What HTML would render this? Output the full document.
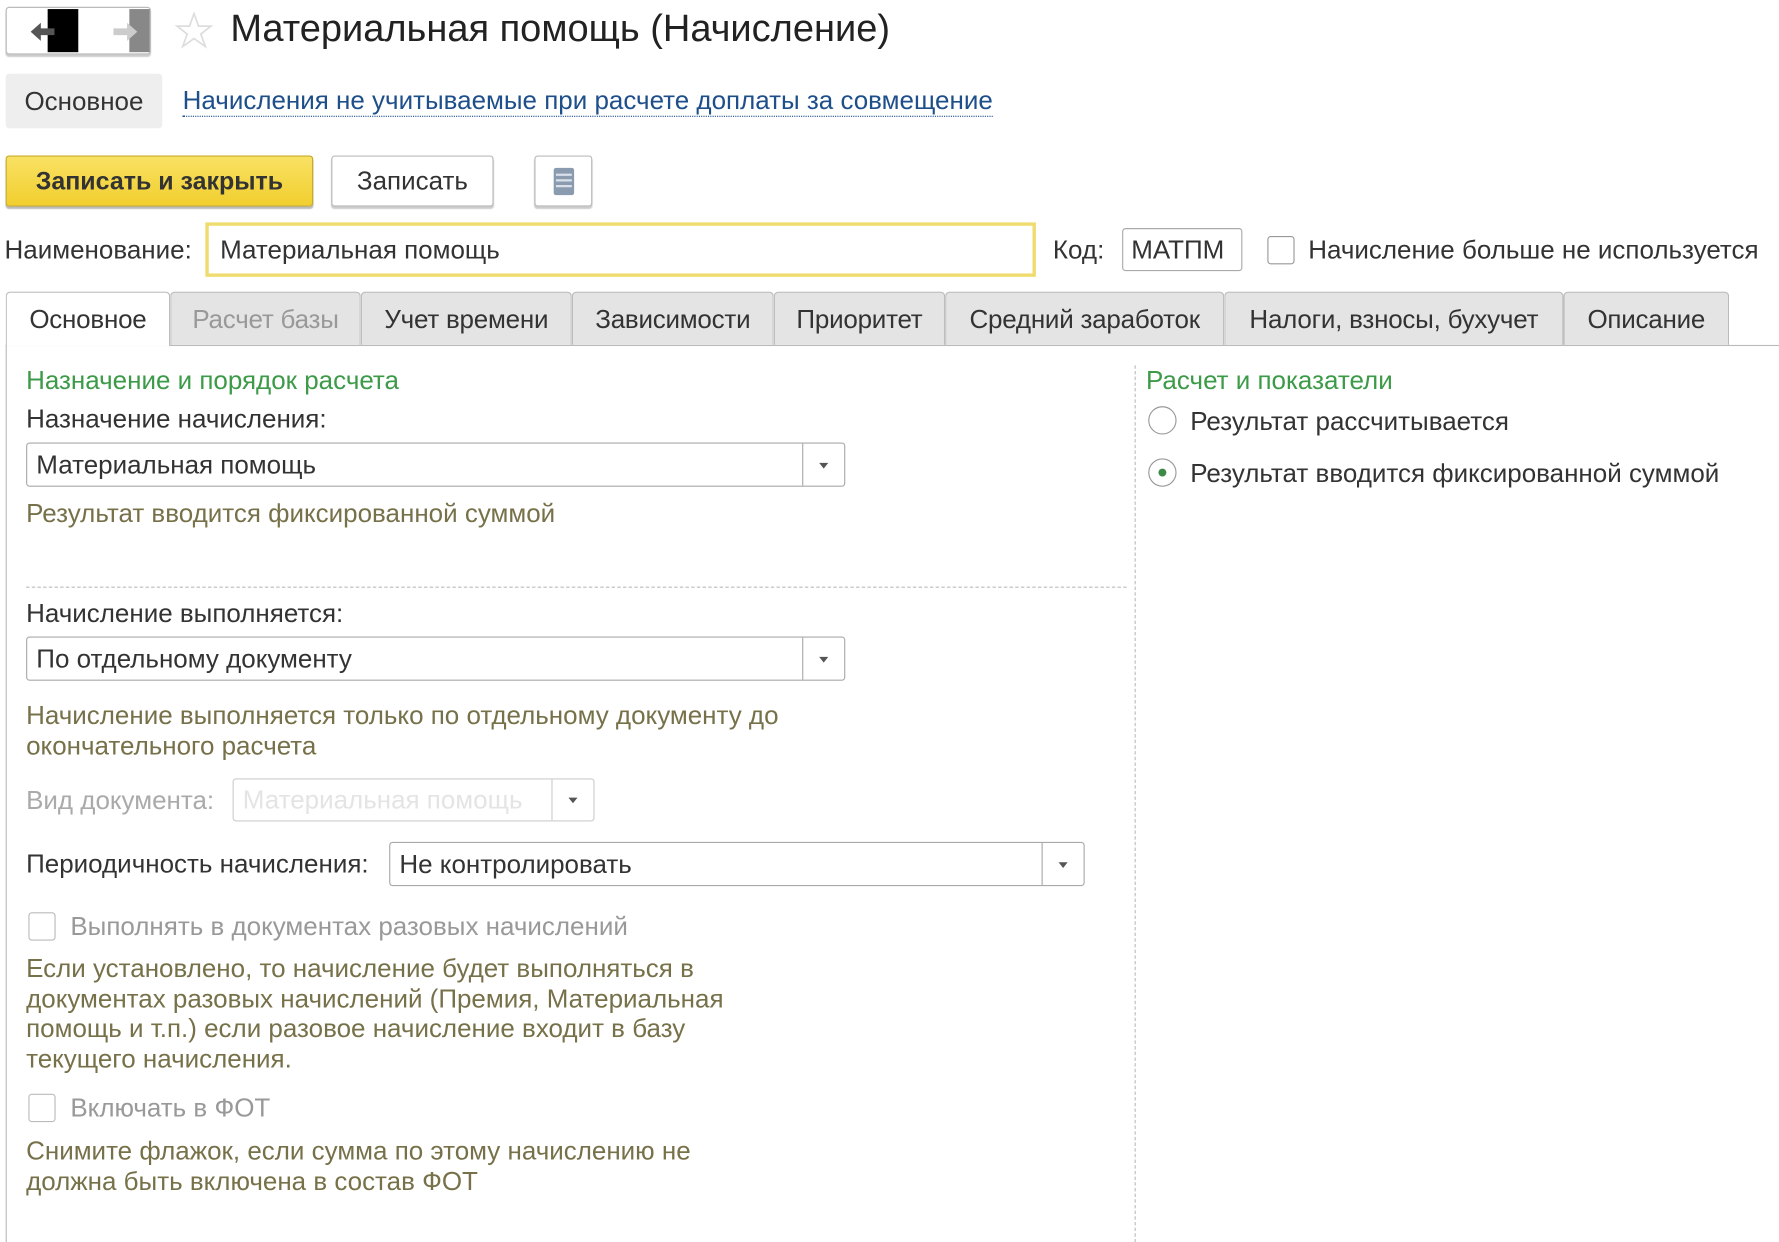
<!DOCTYPE html>
<html><head><meta charset="utf-8"><style>
html,body{margin:0;padding:0;width:1779px;height:1242px;overflow:hidden;background:#fff}
#w{position:absolute;left:0;top:0;width:1568px;height:1095px;transform:scale(1.1346);transform-origin:0 0;font-family:"Liberation Sans",Arial,sans-serif;color:#333;font-size:22.9px}
.a{position:absolute;white-space:nowrap}
.t{line-height:1}
.sel{position:absolute;border:1px solid #a9a9a9;border-radius:3px;background:#fff;box-sizing:border-box}
.sel .v{position:absolute;left:8px;top:50%;transform:translateY(-50%)}
.sel .b{position:absolute;right:0;top:0;bottom:0;width:36px;border-left:1px solid #a9a9a9}
.sel .b:after{content:"";position:absolute;left:14px;top:50%;margin-top:-2px;border-left:4px solid transparent;border-right:4px solid transparent;border-top:5px solid #555}
.tab{position:absolute;top:257px;height:47px;box-sizing:border-box;border:1px solid #bbb;border-bottom:none;background:#e4e4e4;border-radius:4px 4px 0 0;text-align:center;line-height:46px;color:#333;letter-spacing:-0.2px}
.g{color:#3d9a48}
.o{color:#77714a}
.cb{position:absolute;width:24px;height:24px;border:1px solid #999;border-radius:3px;box-sizing:border-box;background:#fff}
.rb{position:absolute;width:25px;height:25px;border:1px solid #999;border-radius:50%;box-sizing:border-box;background:#fff}
</style></head><body><div id="w">
<div class="a" style="left:5px;top:6px;width:128px;height:42px;border:1px solid #bbb;border-radius:3px;box-sizing:border-box;background:#fff;box-shadow:0 2px 1px #ccc"></div>
<div class="a" style="left:42px;top:8px;width:27px;height:38px;background:#000"></div>
<div class="a" style="left:114px;top:8px;width:18px;height:38px;background:#888"></div>
<svg class="a" style="left:24px;top:16px" width="100" height="24"><path d="M3 12 L12 4 V9 H24 V15 H12 V20 Z" fill="#555"/><path d="M97 12 L88 4 V9 H76 V15 H88 V20 Z" fill="#ccc"/></svg>
<svg class="a" style="left:154px;top:10px" width="34" height="34"><path d="M17 2 L21 13 L32 13 L23 20 L27 31 L17 24 L7 31 L11 20 L2 13 L13 13 Z" fill="none" stroke="#ddd" stroke-width="1.5"/></svg>
<div class="a t" style="left:203px;top:9px;font-size:33.5px;color:#222">Материальная помощь (Начисление)</div>
<div class="a" style="left:5px;top:65px;width:138px;height:48px;background:#eee;border-radius:3px;line-height:48px;text-align:center;color:#333">Основное</div>
<div class="a t" style="left:161px;top:77px;color:#1e4f8a;border-bottom:1.5px dotted #1e4f8a;padding-bottom:2px">Начисления не учитываемые при расчете доплаты за совмещение</div>
<div class="a" style="left:5px;top:137px;width:271px;height:45px;background:linear-gradient(#f9e163,#f1cf2f);border:1px solid #c9a920;border-radius:3px;box-sizing:border-box;text-align:center;line-height:43px;font-weight:bold;color:#333;box-shadow:0 2px 1px #bbb;font-size:22px">Записать и закрыть</div>
<div class="a" style="left:292px;top:137px;width:143px;height:45px;background:#fff;border:1px solid #bbb;border-radius:3px;box-sizing:border-box;text-align:center;line-height:43px;box-shadow:0 2px 1px #ccc">Записать</div>
<div class="a" style="left:471px;top:137px;width:51px;height:45px;background:#fff;border:1px solid #bbb;border-radius:3px;box-sizing:border-box;box-shadow:0 2px 1px #ccc"></div>
<svg class="a" style="left:487px;top:147px" width="20" height="26"><rect x="1" y="1" width="18" height="24" rx="2" fill="#8a9bb0"/><path d="M3 7H17M3 12H17M3 17H17" stroke="#d8e0ea" stroke-width="2"/></svg>
<div class="a t" style="left:4px;top:209px">Наименование:</div>
<div class="a" style="left:181px;top:196px;width:732px;height:48px;border:3px solid #f0dc6e;box-sizing:border-box;background:#fff"></div>
<div class="a t" style="left:194px;top:209px">Материальная помощь</div>
<div class="a t" style="left:928px;top:209px">Код:</div>
<div class="a" style="left:989px;top:201px;width:106px;height:38px;border:1px solid #aaa;border-radius:3px;box-sizing:border-box"></div>
<div class="a t" style="left:997px;top:209px">МАТПМ</div>
<div class="cb" style="left:1117px;top:208px;height:25px"></div>
<div class="a t" style="left:1153px;top:209px">Начисление больше не используется</div>
<div class="a" style="left:5px;top:304px;width:1563px;height:1px;background:#bbb"></div>
<div class="a" style="left:5px;top:304px;width:1px;height:791px;background:#bbb"></div>
<div class="tab" style="left:5px;width:145px;background:#fff;height:48px">Основное</div>
<div class="tab" style="left:150px;width:168px;color:#999">Расчет базы</div>
<div class="tab" style="left:318px;width:186px">Учет времени</div>
<div class="tab" style="left:504px;width:178px">Зависимости</div>
<div class="tab" style="left:682px;width:151px">Приоритет</div>
<div class="tab" style="left:833px;width:246px">Средний заработок</div>
<div class="tab" style="left:1079px;width:299px">Налоги, взносы, бухучет</div>
<div class="tab" style="left:1378px;width:146px">Описание</div>
<div class="a t g" style="left:23px;top:324px">Назначение и порядок расчета</div>
<div class="a t" style="left:23px;top:358px">Назначение начисления:</div>
<div class="sel" style="left:23px;top:390px;width:722px;height:39px"><span class="v">Материальная помощь</span><span class="b"></span></div>
<div class="a t o" style="left:23px;top:441px">Результат вводится фиксированной суммой</div>
<div class="a" style="left:23px;top:517px;width:970px;border-top:1px dashed #bbb"></div>
<div class="a" style="left:1000px;top:322px;height:773px;border-left:1px dashed #bbb"></div>
<div class="a t" style="left:23px;top:529px">Начисление выполняется:</div>
<div class="sel" style="left:23px;top:561px;width:722px;height:39px"><span class="v">По отдельному документу</span><span class="b"></span></div>
<div class="a o" style="left:23px;top:617px;line-height:26.5px">Начисление выполняется только по отдельному документу до<br>окончательного расчета</div>
<div class="a t" style="left:23px;top:694px;color:#aaa">Вид документа:</div>
<div class="sel" style="left:205px;top:686px;width:319px;height:38px;border-color:#ccc"><span class="v" style="color:#e4e4e4">Материальная помощь</span><span class="b" style="border-color:#ccc"></span></div>
<div class="a t" style="left:23px;top:750px">Периодичность начисления:</div>
<div class="sel" style="left:343px;top:742px;width:613px;height:39px"><span class="v">Не контролировать</span><span class="b"></span></div>
<div class="cb" style="left:25px;top:804px;height:25px;border-color:#bbb"></div>
<div class="a t" style="left:62px;top:805px;color:#999">Выполнять в документах разовых начислений</div>
<div class="a o" style="left:23px;top:840px;line-height:26.5px">Если установлено, то начисление будет выполняться в<br>документах разовых начислений (Премия, Материальная<br>помощь и т.п.) если разовое начисление входит в базу<br>текущего начисления.</div>
<div class="cb" style="left:25px;top:964px;height:25px;border-color:#bbb"></div>
<div class="a t" style="left:62px;top:965px;color:#999">Включать в ФОТ</div>
<div class="a o" style="left:23px;top:1001px;line-height:26.5px">Снимите флажок, если сумма по этому начислению не<br>должна быть включена в состав ФОТ</div>
<div class="a t g" style="left:1010px;top:324px">Расчет и показатели</div>
<div class="rb" style="left:1012px;top:358px"></div>
<div class="a t" style="left:1049px;top:360px">Результат рассчитывается</div>
<div class="rb" style="left:1012px;top:404px"></div>
<div class="a" style="left:1021px;top:413px;width:7px;height:7px;border-radius:50%;background:#3d8a48"></div>
<div class="a t" style="left:1049px;top:406px">Результат вводится фиксированной суммой</div>
</div></body></html>
